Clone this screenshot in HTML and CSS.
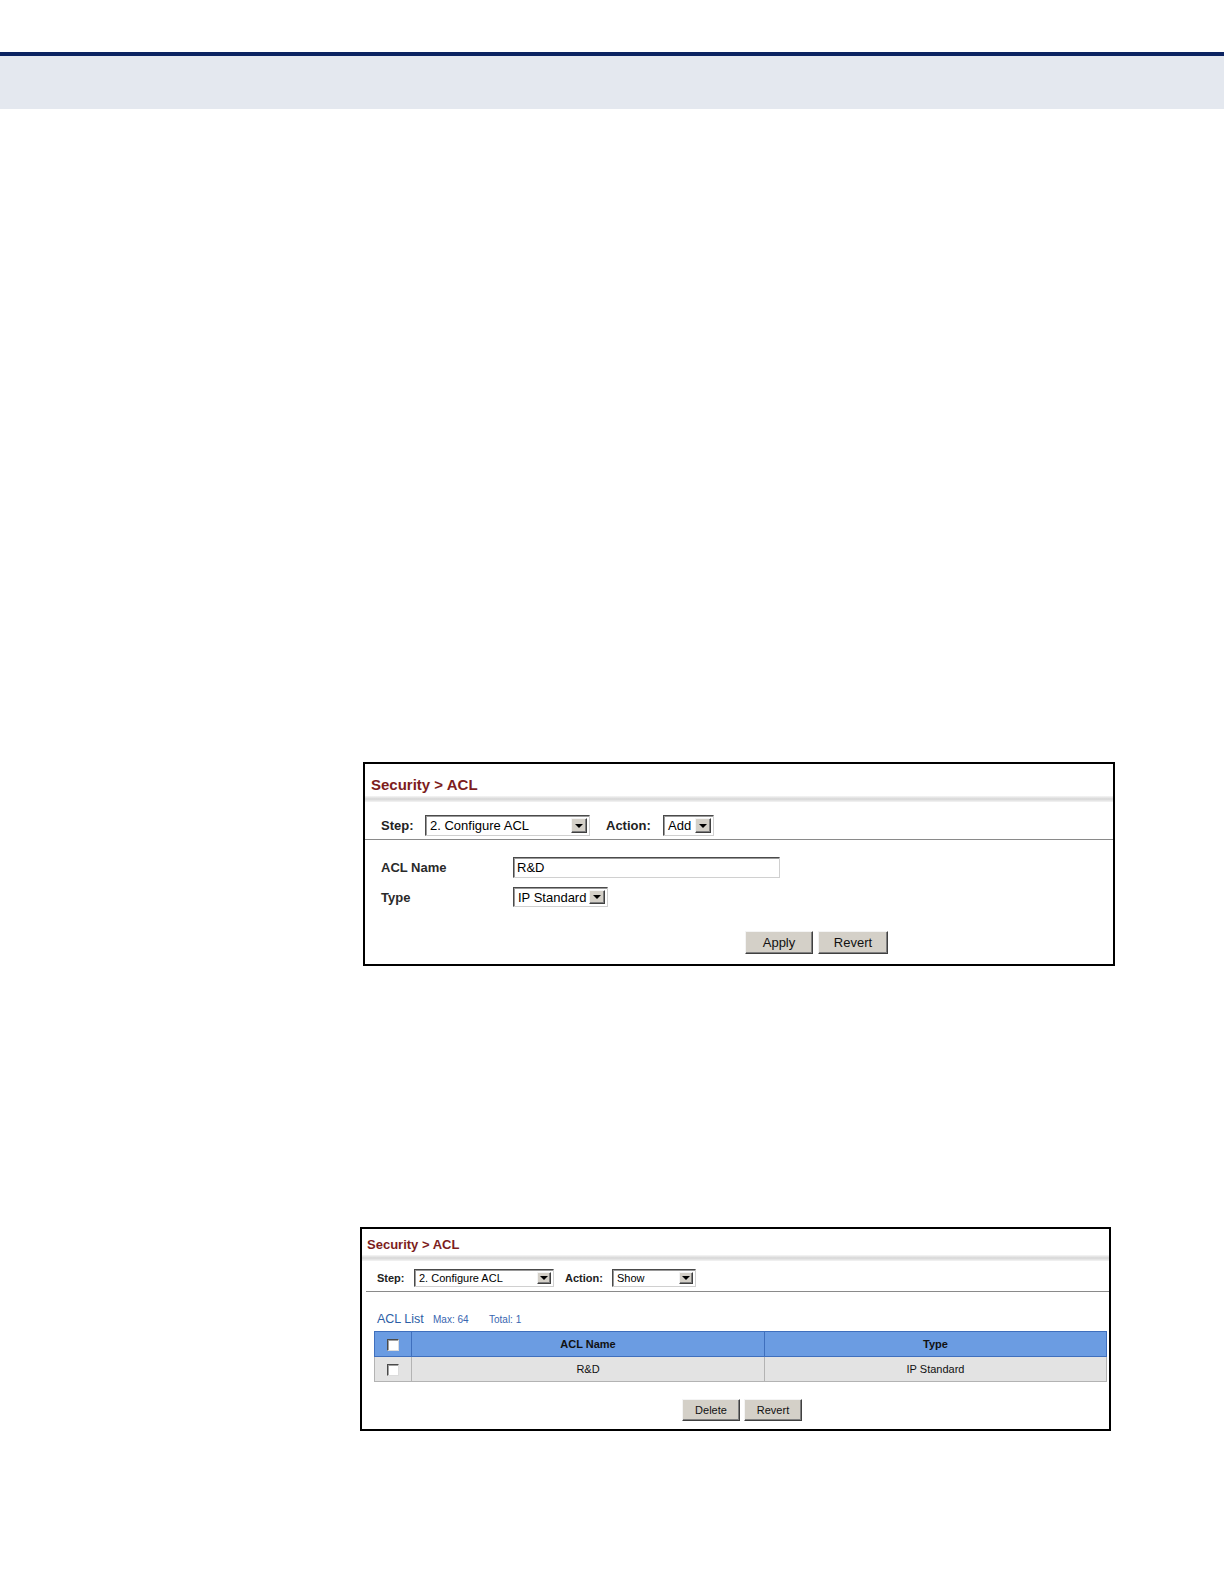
FILE: index.html
```html
<!DOCTYPE html>
<html>
<head>
<meta charset="utf-8">
<title>Security &gt; ACL</title>
<link rel="stylesheet" href="styles.css">
</head>
<body>
<div class="topbar"></div>
<div class="headband"></div>

<div class="panel panel-a">
  <div class="title">Security &gt; ACL</div>
  <div class="shade"></div>
  <div class="steprow">
    <span class="lbl lbl-step">Step:</span>
    <div class="sel sel-step"><span class="seltext">2. Configure ACL</span><i class="arr"></i></div>
    <span class="lbl lbl-act">Action:</span>
    <div class="sel sel-add"><span class="seltext">Add</span><i class="arr"></i></div>
  </div>
  <div class="rule"></div>
  <div class="frow frow-name">
    <span class="flbl">ACL Name</span>
    <div class="input">R&amp;D</div>
  </div>
  <div class="frow frow-type">
    <span class="flbl">Type</span>
    <div class="sel sel-type"><span class="seltext">IP Standard</span><i class="arr"></i></div>
  </div>
  <div class="btns">
    <button class="btn btn-apply">Apply</button>
    <button class="btn btn-revert">Revert</button>
  </div>
</div>

<div class="panel panel-b">
  <div class="title">Security &gt; ACL</div>
  <div class="shade"></div>
  <div class="steprow">
    <span class="lbl lbl-step">Step:</span>
    <div class="sel sel-step"><span class="seltext">2. Configure ACL</span><i class="arr"></i></div>
    <span class="lbl lbl-act">Action:</span>
    <div class="sel sel-show"><span class="seltext">Show</span><i class="arr"></i></div>
  </div>
  <div class="rule"></div>
  <div class="listhead">
    <span class="listname">ACL List</span><span class="meta meta-max">Max: 64</span><span class="meta">Total: 1</span>
  </div>
  <table class="acltable">
    <thead>
      <tr>
        <th class="cbcol"><span class="cb"></span></th>
        <th class="namecol">ACL Name</th>
        <th class="typecol">Type</th>
      </tr>
    </thead>
    <tbody>
      <tr>
        <td class="cbcol"><span class="cb"></span></td>
        <td>R&amp;D</td>
        <td>IP Standard</td>
      </tr>
    </tbody>
  </table>
  <div class="btns">
    <button class="btn">Delete</button>
    <button class="btn">Revert</button>
  </div>
</div>
</body>
</html>
```

FILE: styles.css
```css
* { box-sizing: border-box; }
body {
  margin: 0;
  background: #fff;
  font-family: "Liberation Sans", Arial, sans-serif;
  color: #000;
}
.topbar {
  margin-top: 52px;
  height: 4px;
  background: #0b2361;
}
.headband {
  height: 53px;
  background: #e4e8ef;
}

/* panels */
.panel {
  border: 2px solid #000;
  background: #fff;
  height: 204px;
}
.panel-a { margin: 653px 0 0 363px; width: 752px; }
.panel-b { margin: 261px 0 0 360px; width: 751px; }

.title {
  color: #7d1d1d;
  font-weight: bold;
}
.panel-a .title { font-size: 15px; line-height: 18px; margin-top: 12px; padding-left: 6px; }
.panel-b .title { font-size: 13px; line-height: 16px; margin-top: 8px; padding-left: 5px; }

.shade {
  height: 6px;
  margin-top: 2px;
  background: linear-gradient(#f6f6f6, #d6d6d6 50%, #f4f4f4);
}

.steprow {
  display: flex;
  align-items: center;
}
.panel-a .steprow { height: 21px; margin-top: 13px; padding-left: 16px; }
.panel-b .steprow { height: 18px; margin-top: 8px; padding-left: 15px; }

.lbl { font-weight: bold; color: #222; }
.panel-a .lbl { font-size: 13px; }
.panel-b .lbl { font-size: 11px; }
.panel-a .lbl-step { width: 44px; }
.panel-a .lbl-act { width: 57px; margin-left: 16px; }
.panel-b .lbl-step { width: 37px; }
.panel-b .lbl-act { width: 47px; margin-left: 11px; }

/* select boxes */
.sel {
  display: flex;
  align-items: stretch;
  height: 100%;
  background: #fff;
  border: 1px solid;
  border-color: #4a4a4a #d0d0d0 #d0d0d0 #4a4a4a;
  box-shadow: inset 1px 1px 0 #9a9a9a;
}
.seltext {
  flex: 1;
  display: flex;
  align-items: center;
  padding-left: 4px;
  white-space: nowrap;
  overflow: hidden;
}
.panel-a .seltext { font-size: 13px; }
.panel-b .seltext { font-size: 11px; }
.arr {
  position: relative;
  width: 16px;
  margin: 2px 2px 2px 0;
  background: #d4d0c8;
  border: 1px solid;
  border-color: #f4f4f4 #404040 #404040 #f4f4f4;
  box-shadow: inset -1px -1px 0 #808080;
}
.arr::after {
  content: "";
  position: absolute;
  left: 50%;
  top: 50%;
  margin: -2px 0 0 -4px;
  border-left: 4px solid transparent;
  border-right: 4px solid transparent;
  border-top: 4px solid #000;
}
.panel-a .sel-step { width: 165px; }
.sel-add { width: 51px; }
.panel-b .sel-step { width: 140px; }
.sel-show { width: 84px; }
.panel-b .arr { width: 14px; }

.rule {
  height: 1px;
  background: #8a8a8a;
}
.panel-a .rule { margin-top: 3px; }
.panel-b .rule { margin-top: 4px; margin-left: 4px; }

/* form rows */
.frow {
  display: flex;
  align-items: center;
  padding-left: 16px;
}
.frow-name { margin-top: 17px; height: 21px; }
.frow-type { margin-top: 9px; height: 20px; }
.flbl {
  width: 132px;
  font-size: 13px;
  font-weight: bold;
  color: #2a2a2a;
}
.input {
  width: 267px;
  height: 100%;
  display: flex;
  align-items: center;
  padding-left: 3px;
  font-size: 13px;
  border: 1px solid;
  border-color: #4a4a4a #d0d0d0 #d0d0d0 #4a4a4a;
  box-shadow: inset 1px 1px 0 #9a9a9a;
}
.sel-type { width: 95px; }

/* buttons */
.btns { display: flex; }
.panel-a .btns { margin-top: 24px; padding-left: 380px; gap: 5px; }
.panel-b .btns { margin-top: 17px; padding-left: 320px; gap: 4px; }
.btn {
  font-family: "Liberation Sans", Arial, sans-serif;
  background: #d4d0c8;
  border: 1px solid;
  border-color: #f4f4f4 #404040 #404040 #f4f4f4;
  box-shadow: inset -1px -1px 0 #808080;
  color: #111;
  padding: 0;
}
.panel-a .btn { height: 23px; font-size: 13px; }
.btn-apply { width: 68px; }
.btn-revert { width: 70px; }
.panel-b .btn { width: 58px; height: 22px; font-size: 11px; }

/* list */
.listhead {
  margin-top: 19px;
  padding-left: 15px;
  line-height: 16px;
  display: flex;
  align-items: baseline;
}
.listname { width: 56px; font-size: 12.5px; color: #2c5ea5; }
.meta { font-size: 10px; color: #3866b0; }
.meta-max { width: 56px; }

.acltable {
  margin: 3px 0 0 12px;
  width: 733px;
  border-collapse: collapse;
  table-layout: fixed;
  font-size: 11px;
}
.acltable th {
  height: 25px;
  background: #6b9ce2;
  border: 1px solid #3f6fbd;
  font-weight: bold;
  color: #111;
  padding: 0;
}
.acltable td {
  height: 25px;
  background: #e3e3e3;
  border: 1px solid #b3b3b3;
  text-align: center;
  color: #111;
  padding: 0;
}
.cbcol { width: 37px; }
.namecol { width: 353px; }
.cb {
  display: inline-block;
  vertical-align: middle;
  width: 12px;
  height: 12px;
  background: #fff;
  border: 1px solid;
  border-color: #4a4a4a #dcdcdc #dcdcdc #4a4a4a;
  box-shadow: inset 1px 1px 0 #a0a0a0;
}
```
